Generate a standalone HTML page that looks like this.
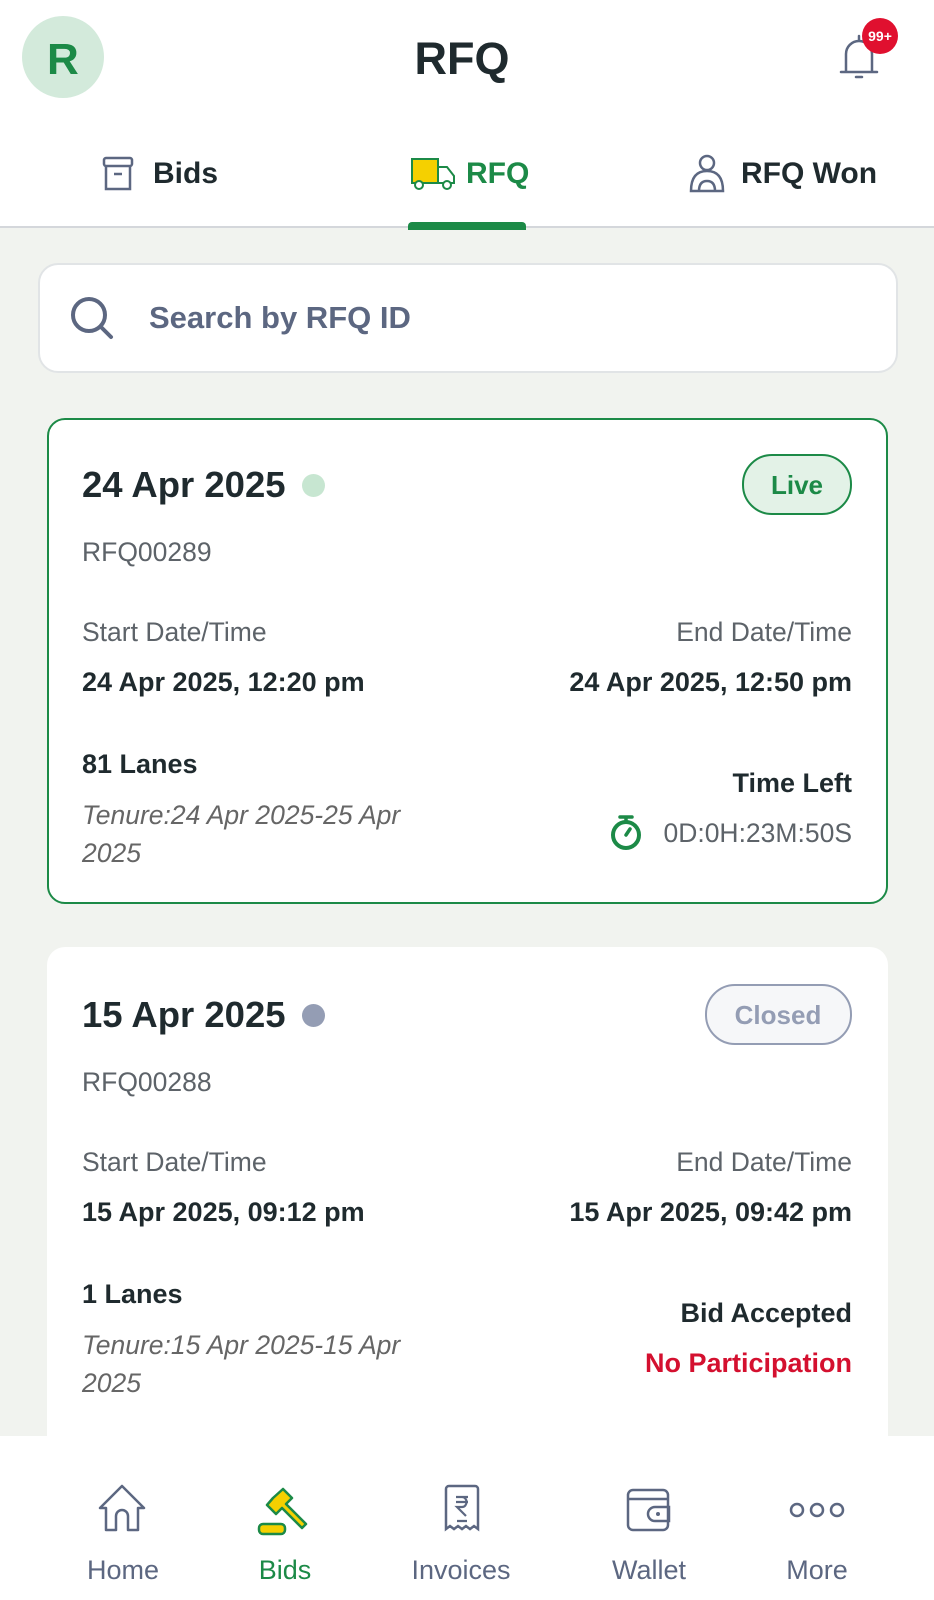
<!DOCTYPE html>
<html><head><meta charset="utf-8"><style>
*{box-sizing:border-box;margin:0;padding:0}
body{width:934px;height:1600px;overflow:hidden;background:#f1f3ef;font-family:"Liberation Sans",sans-serif;position:relative;color:#1f2a2e}
.abs{position:absolute}
.t{position:absolute;white-space:nowrap;line-height:1}
.top{position:absolute;left:0;top:0;width:934px;height:228px;background:#fff;border-bottom:2px solid #d4d7db}
.card{position:absolute;left:47px;width:841px;background:#fff;border-radius:18px}
.lbl{font-size:26.5px;color:#5d6369}
.val{font-size:27px;font-weight:bold;color:#1f2a2e}
.it{font-size:26.5px;font-style:italic;color:#666}
.nav{position:absolute;left:0;top:1436px;width:934px;height:164px;background:#fff}
.nl{font-size:27px;color:#5c6781;transform:translateX(-50%)}
</style></head><body>
<div class="top"></div>
<div class="abs" style="left:22px;top:16px;width:82px;height:82px;border-radius:50%;background:#d3eadb"></div>
<div class="t" style="left:47px;top:38px;font-size:44px;font-weight:bold;color:#1c8a47">R</div>
<div class="t" style="left:462px;top:36px;font-size:45px;font-weight:bold;color:#1f2a2e;transform:translateX(-50%)">RFQ</div>
<svg class="abs" style="left:836px;top:30px" width="46" height="54" viewBox="0 0 46 54"><path d="M23 6v4M10 42V24a13 13 0 0 1 26 0v18M5 42h36M20 47h6" stroke="#5c6781" stroke-width="2.5" fill="none" stroke-linecap="round"/></svg>
<div class="abs" style="left:862px;top:18px;width:36px;height:36px;border-radius:50%;background:#e0102f"></div>
<div class="t" style="left:880px;top:29px;font-size:14px;font-weight:bold;color:#fff;transform:translateX(-50%)">99+</div>

<svg class="abs" style="left:101px;top:155px" width="34" height="38" viewBox="0 0 34 38"><rect x="3" y="3" width="28" height="8" rx="2" stroke="#5c6781" stroke-width="2.5" fill="none"/><path d="M5 11v23h24V11M13 19h8" stroke="#5c6781" stroke-width="2.5" fill="none"/></svg>
<div class="t" style="left:153px;top:159px;font-size:30px;font-weight:bold;color:#1f2a2e">Bids</div>
<svg class="abs" style="left:410px;top:157px" width="46" height="34" viewBox="0 0 46 34"><rect x="2" y="2" width="26" height="24" fill="#f5d000" stroke="#1c8a47" stroke-width="2"/><path d="M28 10h9l7 9v7H28z" fill="none" stroke="#1c8a47" stroke-width="2"/><circle cx="9" cy="28" r="4" fill="#fff" stroke="#1c8a47" stroke-width="2"/><circle cx="37" cy="28" r="4" fill="#fff" stroke="#1c8a47" stroke-width="2"/></svg>
<div class="t" style="left:466px;top:159px;font-size:30px;font-weight:bold;color:#1c8a47">RFQ</div>
<svg class="abs" style="left:687px;top:153px" width="40" height="42" viewBox="0 0 40 42"><circle cx="20" cy="10" r="7" stroke="#5c6781" stroke-width="2.5" fill="none"/><path d="M4 38q0-20 16-20t16 20zM12 38q0-10 8-10t8 10" stroke="#5c6781" stroke-width="2.5" fill="none"/></svg>
<div class="t" style="left:741px;top:159px;font-size:30px;font-weight:bold;color:#1f2a2e">RFQ Won</div>
<div class="abs" style="left:408px;top:222px;width:118px;height:8px;border-radius:4px 4px 0 0;background:#1c8a47"></div>

<div class="abs" style="left:38px;top:263px;width:860px;height:110px;background:#fff;border:2px solid #e1e4e6;border-radius:20px"></div>
<svg class="abs" style="left:69px;top:295px" width="48" height="48" viewBox="0 0 48 48"><circle cx="20" cy="20" r="16" stroke="#5c6781" stroke-width="4" fill="none"/><path d="M32 32l10 10" stroke="#5c6781" stroke-width="4" stroke-linecap="round"/></svg>
<div class="t" style="left:149px;top:302px;font-size:31px;font-weight:bold;color:#5c6781">Search by RFQ ID</div>

<div class="card" style="top:418px;height:486px;border:2px solid #1c8a47"></div>
<div class="t" style="left:82px;top:467px;font-size:36.5px;font-weight:bold">24 Apr 2025</div>
<div class="abs" style="left:302px;top:474px;width:23px;height:23px;border-radius:50%;background:#c7e6d1"></div>
<div class="abs" style="left:742px;top:454px;width:110px;height:61px;border-radius:30px;background:#e3f2e7;border:2px solid #1c8a47"></div>
<div class="t" style="left:797px;top:472px;font-size:26px;font-weight:bold;color:#1c8a47;transform:translateX(-50%)">Live</div>
<div class="t lbl" style="left:82px;top:539px">RFQ00289</div>
<div class="t lbl" style="left:82px;top:619px">Start Date/Time</div>
<div class="t lbl" style="right:82px;top:619px">End Date/Time</div>
<div class="t val" style="left:82px;top:669px">24 Apr 2025, 12:20 pm</div>
<div class="t val" style="right:82px;top:669px">24 Apr 2025, 12:50 pm</div>
<div class="t val" style="left:82px;top:751px">81 Lanes</div>
<div class="t it" style="left:82px;top:802px">Tenure:24 Apr 2025-25 Apr</div>
<div class="t it" style="left:82px;top:840px">2025</div>
<div class="t val" style="right:82px;top:770px">Time Left</div>
<svg class="abs" style="left:608px;top:813px" width="36" height="38" viewBox="0 0 36 38"><circle cx="18" cy="22" r="13" stroke="#1c8a47" stroke-width="4" fill="none"/><path d="M12 4h12M18 4v5M18 22l4-6" stroke="#1c8a47" stroke-width="3.5" stroke-linecap="round"/></svg>
<div class="t lbl" style="right:82px;top:820px">0D:0H:23M:50S</div>

<div class="card" style="top:947px;height:520px"></div>
<div class="t" style="left:82px;top:997px;font-size:36.5px;font-weight:bold">15 Apr 2025</div>
<div class="abs" style="left:302px;top:1004px;width:23px;height:23px;border-radius:50%;background:#949db4"></div>
<div class="abs" style="left:705px;top:984px;width:147px;height:61px;border-radius:30px;background:#f6f7f9;border:2px solid #949db4"></div>
<div class="t" style="left:778px;top:1002px;font-size:26px;font-weight:bold;color:#949db4;transform:translateX(-50%)">Closed</div>
<div class="t lbl" style="left:82px;top:1069px">RFQ00288</div>
<div class="t lbl" style="left:82px;top:1149px">Start Date/Time</div>
<div class="t lbl" style="right:82px;top:1149px">End Date/Time</div>
<div class="t val" style="left:82px;top:1199px">15 Apr 2025, 09:12 pm</div>
<div class="t val" style="right:82px;top:1199px">15 Apr 2025, 09:42 pm</div>
<div class="t val" style="left:82px;top:1281px">1 Lanes</div>
<div class="t it" style="left:82px;top:1332px">Tenure:15 Apr 2025-15 Apr</div>
<div class="t it" style="left:82px;top:1370px">2025</div>
<div class="t val" style="right:82px;top:1300px">Bid Accepted</div>
<div class="t val" style="right:82px;top:1350px;color:#d4102f">No Participation</div>

<div class="nav"></div>
<svg class="abs" style="left:96px;top:1482px" width="52" height="52" viewBox="0 0 52 52"><path d="M4 26L26 4l22 22h-6v22H32V34a6 6 0 0 0-12 0v14H10V26z" stroke="#5c6781" stroke-width="2.5" fill="none" stroke-linejoin="round"/></svg>
<svg class="abs" style="left:257px;top:1486px" width="56" height="52" viewBox="0 0 56 52"><path d="M16 12l10-9 9 9-6 6 20 20-4 4-20-20-6 6-9-9z" fill="#f5d000" stroke="#1c8a47" stroke-width="2.5" stroke-linejoin="round"/><rect x="2" y="38" width="26" height="10" rx="4" fill="#f5d000" stroke="#1c8a47" stroke-width="2.5"/></svg>
<svg class="abs" style="left:443px;top:1483px" width="38" height="52" viewBox="0 0 38 52"><path d="M3 6a3 3 0 0 1 3-3h26a3 3 0 0 1 3 3v40l-4-3-4 3-4-3-4 3-4-3-4 3-4-3-4 3z" stroke="#5c6781" stroke-width="2.5" fill="none"/><path d="M13 14h12M13 19h12M19 14c6 0 6 10 0 10h-5l9 9M14 38h10" stroke="#5c6781" stroke-width="2.2" fill="none"/></svg>
<svg class="abs" style="left:625px;top:1487px" width="48" height="46" viewBox="0 0 48 46"><rect x="3" y="3" width="40" height="40" rx="5" stroke="#5c6781" stroke-width="2.5" fill="none"/><path d="M3 12h40M30 20h14v14H30a7 7 0 0 1 0-14z" stroke="#5c6781" stroke-width="2.5" fill="none"/><circle cx="33" cy="27" r="2" fill="#5c6781"/></svg>
<svg class="abs" style="left:788px;top:1500px" width="58" height="20" viewBox="0 0 58 20"><circle cx="9" cy="10" r="6" stroke="#5c6781" stroke-width="2.5" fill="none"/><circle cx="29" cy="10" r="6" stroke="#5c6781" stroke-width="2.5" fill="none"/><circle cx="49" cy="10" r="6" stroke="#5c6781" stroke-width="2.5" fill="none"/></svg>
<div class="t nl" style="left:123px;top:1557px">Home</div>
<div class="t nl" style="left:285px;top:1557px;color:#1c8a47">Bids</div>
<div class="t nl" style="left:461px;top:1557px">Invoices</div>
<div class="t nl" style="left:649px;top:1557px">Wallet</div>
<div class="t nl" style="left:817px;top:1557px">More</div>
</body></html>
